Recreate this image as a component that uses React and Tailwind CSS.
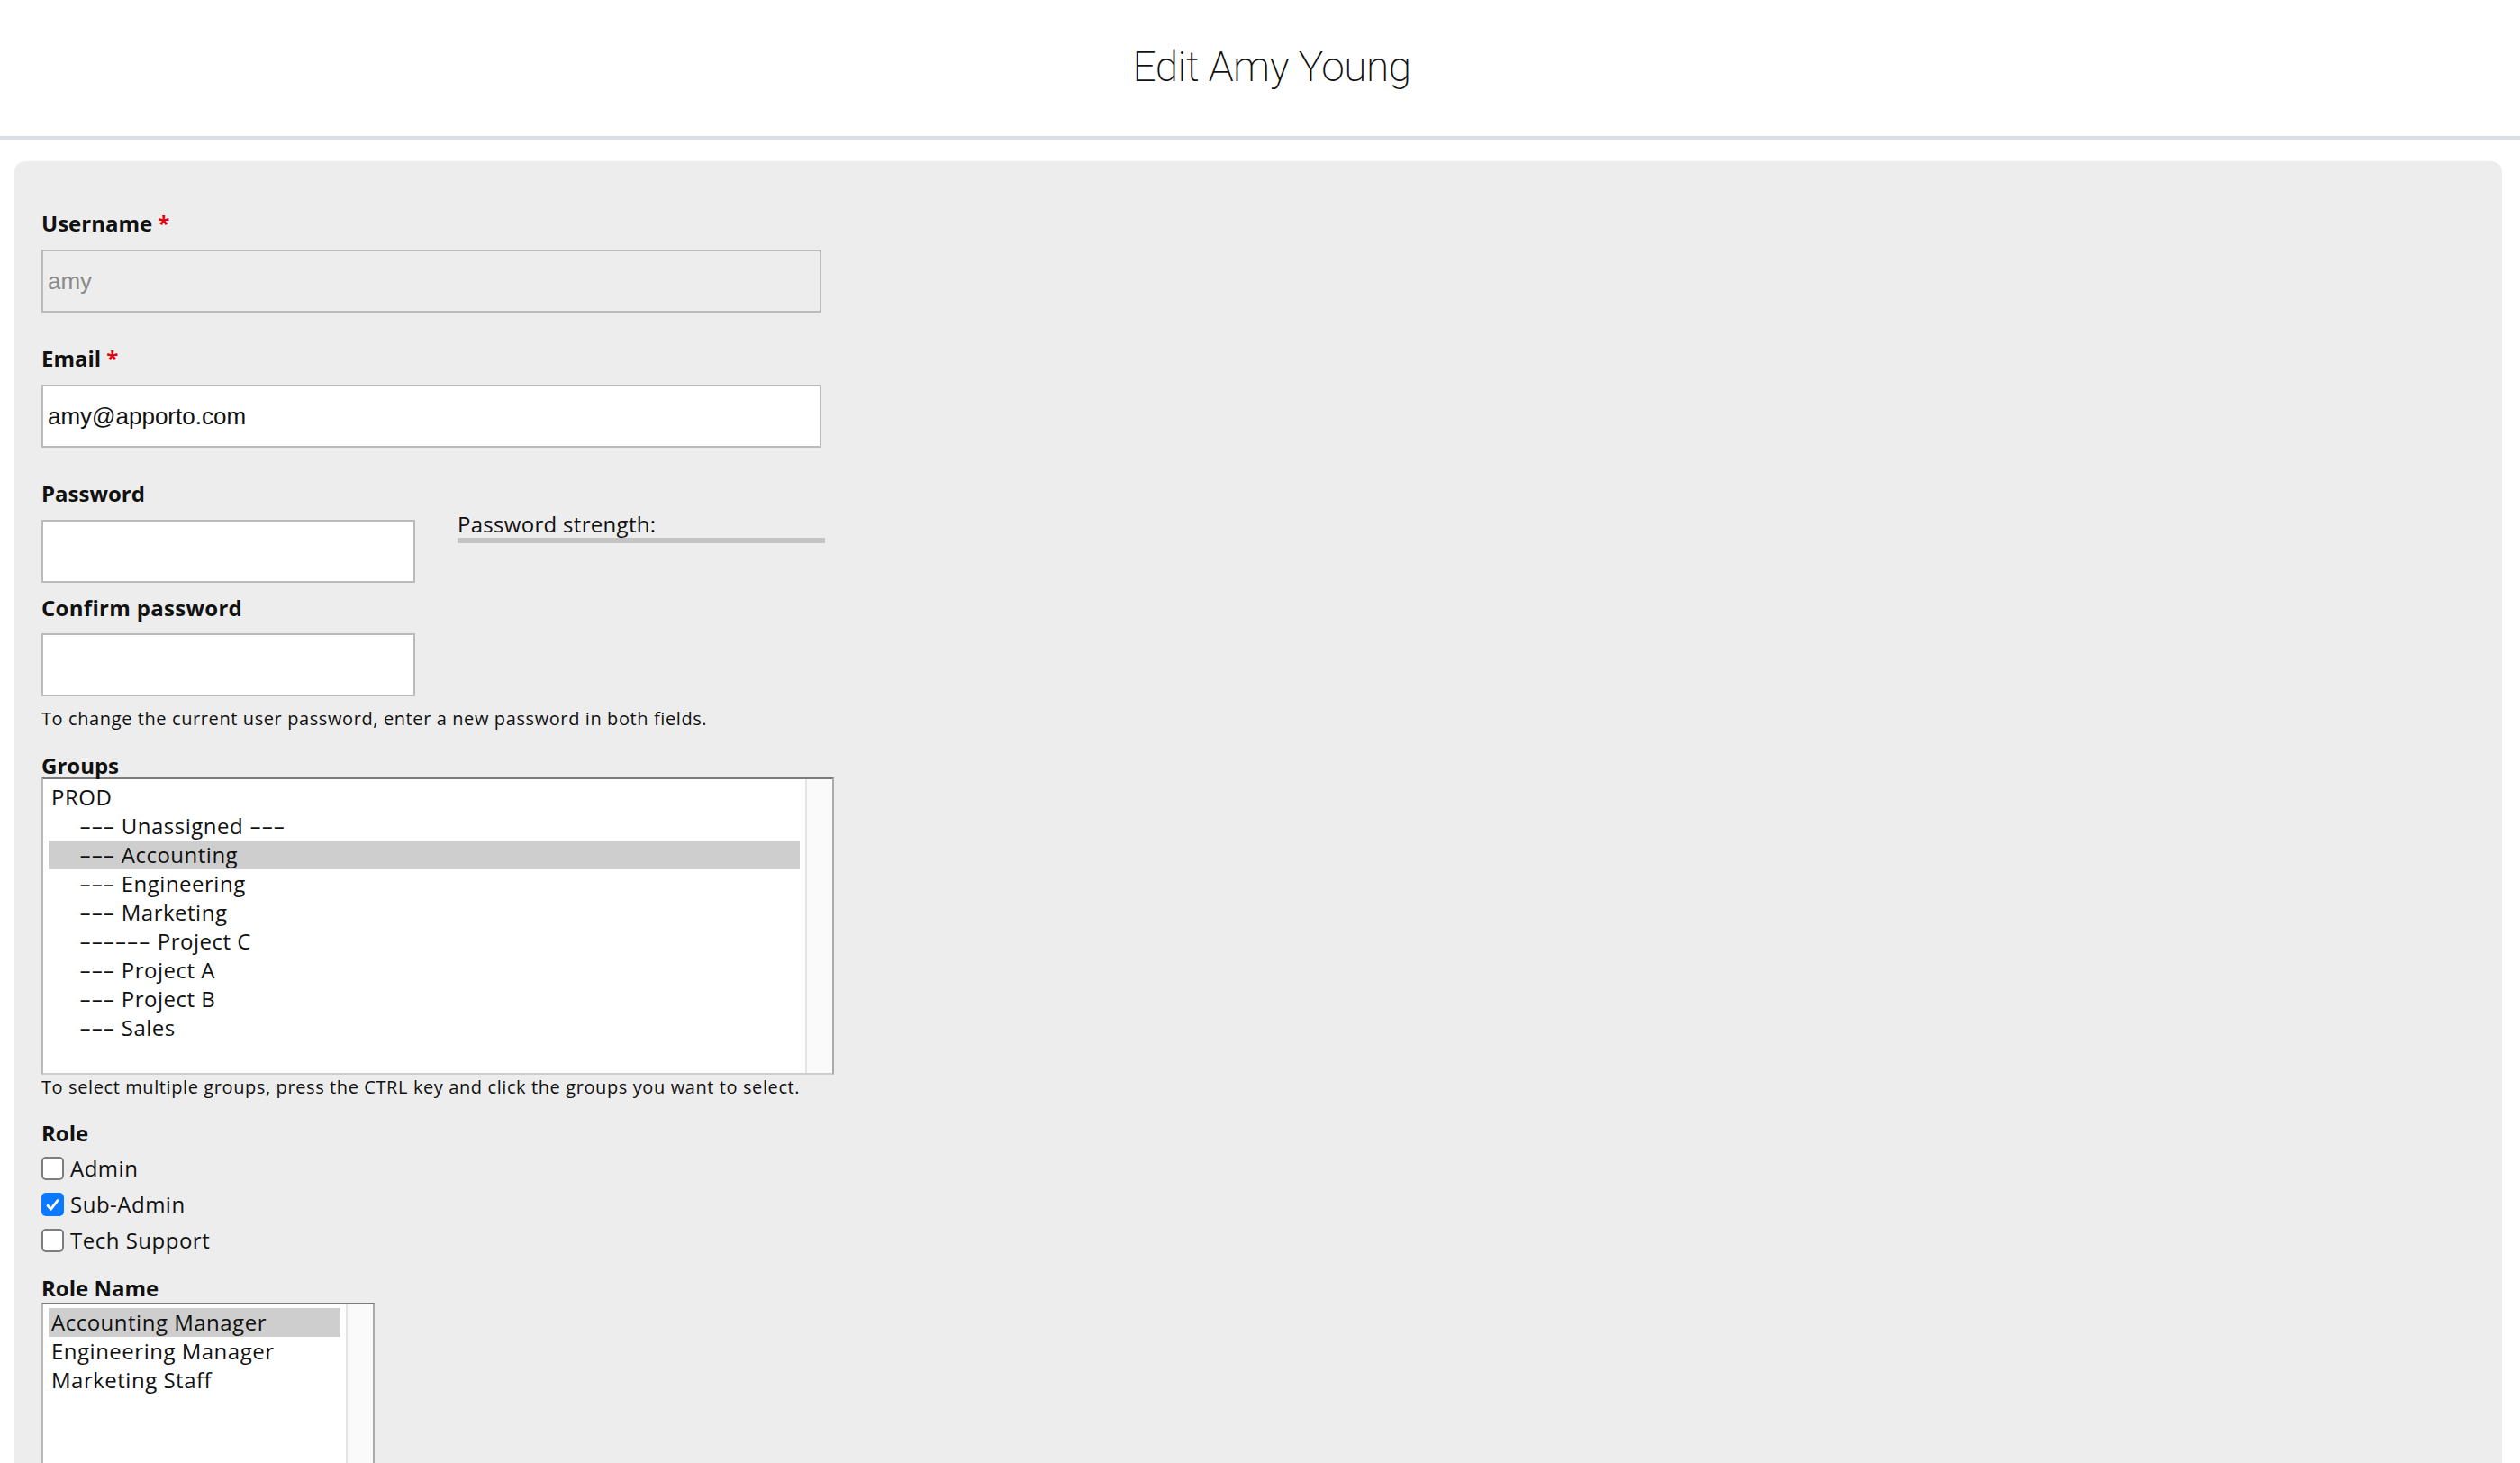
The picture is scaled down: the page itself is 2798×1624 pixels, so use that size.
import React from "react";

const Label = ({ children, required, className = "" }) => (
  <div className={"text-[24px] leading-[28px] font-bold text-[#111] " + className}>
    {children}
    {required && <span className="ml-[6px] text-[#e3000f]">*</span>}
  </div>
);

const Checkbox = ({ checked, label }) => (
  <div className="flex h-[32px] items-center">
    {checked ? (
      <span className="flex h-[26px] w-[25px] items-center justify-center rounded-[5px] bg-[#0b79ff]">
        <svg width="17" height="17" viewBox="0 0 17 17">
          <path d="M3 9.2 L6.6 13.2 L14 3.6" fill="none" stroke="white" strokeWidth="2.8" strokeLinecap="round" strokeLinejoin="round" />
        </svg>
      </span>
    ) : (
      <span className="h-[26px] w-[25px] rounded-[5px] border-2 border-[#7d7d7d] bg-white" />
    )}
    <span className="ml-[7px] text-[24px] leading-[32px] tracking-[0.5px] text-[#111]">{label}</span>
  </div>
);

const OptionText = ({ text }) =>
  text.split(/(-+)/).map((part, i) => {
    if (part === "---")
      return (
        <span key={i} className="inline-block w-[40px] origin-left scale-x-[1.7] tracking-normal">
          {part}
        </span>
      );
    if (part === "------")
      return (
        <span key={i} className="inline-block w-[80px] origin-left scale-x-[1.7] tracking-normal">
          {part}
        </span>
      );
    return <span key={i}>{part}</span>;
  });

const ListBox = ({ items, width, height }) => (
  <div
    className={
      "flex border-2 border-t-[#7b7b7b] border-l-[#b9b9b9] border-r-[#ababab] border-b-[#cdcdcd] bg-white " +
      width +
      " " +
      height
    }
  >
    <div className="flex-1 pl-[6px] pr-[6px] pt-[4px]">
      {items.map((it, i) => (
        <div
          key={i}
          className={
            "h-[32px] whitespace-pre text-[24px] leading-[32px] tracking-[0.5px] text-[#111] " +
            (it.indent ? "pl-[34px] " : "pl-[3px] ") +
            (it.selected ? "bg-[#cecece]" : "")
          }
        >
          <OptionText text={it.text} />
        </div>
      ))}
    </div>
    <div className="h-full w-[30px] border-l-2 border-[#e4e4e4] bg-[#fafafa]" />
  </div>
);

export default function App() {
  const groups = [
    { text: "PROD" },
    { text: "--- Unassigned ---", indent: true },
    { text: "--- Accounting", indent: true, selected: true },
    { text: "--- Engineering", indent: true },
    { text: "--- Marketing", indent: true },
    { text: "------ Project C", indent: true },
    { text: "--- Project A", indent: true },
    { text: "--- Project B", indent: true },
    { text: "--- Sales", indent: true },
  ];
  const roles = [
    { text: "Accounting Manager", selected: true },
    { text: "Engineering Manager" },
    { text: "Marketing Staff" },
  ];

  return (
    <div className="min-h-screen bg-white font-['Open_Sans',sans-serif]">
      <header className="flex h-[155px] justify-center border-b-4 border-[#d9dde6] pl-[26px] pt-[51px]">
        <h1 className="font-['Roboto',sans-serif] text-[46px] font-[200] leading-[46px] tracking-[-0.5px] text-[#111]">
          Edit Amy Young
        </h1>
      </header>

      <div className="ml-[16px] mr-[20px] mt-[24px] h-[1520px] rounded-t-[12px] bg-[#ededed] pl-[30px] pt-[55px]">
        <Label required>Username</Label>
        <div className="mt-[15px] flex h-[70px] w-[866px] items-center border-2 border-[#bbbbbb] bg-[#ededed] pl-[5px] font-['Liberation_Sans',sans-serif] text-[26px] text-[#8a8a8a]">
          amy
        </div>

        <Label required className="mt-[37px]">Email</Label>
        <div className="mt-[15px] flex h-[70px] w-[866px] items-center border-2 border-[#bbbbbb] bg-white pl-[5px] font-['Liberation_Sans',sans-serif] text-[26px] text-[#111]">
          amy@apporto.com
        </div>

        <div className="mt-[37px] flex">
          <div className="w-[415px]">
            <Label>Password</Label>
            <div className="mt-[15px] h-[70px] w-[415px] border-2 border-[#bbbbbb] bg-white" />
          </div>
          <div className="ml-[47px] w-[408px] pt-[34px]">
            <div className="text-[24px] leading-[28px] tracking-[0.3px] text-[#111]">Password strength:</div>
            <div className="mt-[1px] h-[6px] w-full bg-[#c4c4c4]" />
          </div>
        </div>

        <Label className="mt-[14px] tracking-[0.3px]">Confirm password</Label>
        <div className="mt-[14px] h-[70px] w-[415px] border-2 border-[#bbbbbb] bg-white" />

        <div className="mt-[11px] text-[20px] leading-[28px] tracking-[0.6px] text-[#111]">
          To change the current user password, enter a new password in both fields.
        </div>

        <Label className="mt-[24px]">Groups</Label>
        <div className="-mt-[1px]">
          <ListBox items={groups} width="w-[880px]" height="h-[330px]" />
        </div>
        <div className="text-[20px] leading-[28px] tracking-[0.6px] text-[#111]">
          To select multiple groups, press the CTRL key and click the groups you want to select.
        </div>

        <Label className="mt-[23px]">Role</Label>
        <div className="mt-[9px] flex flex-col gap-[8px]">
          <Checkbox label="Admin" />
          <Checkbox label="Sub-Admin" checked />
          <Checkbox label="Tech Support" />
        </div>

        <Label className="mt-[23px]">Role Name</Label>
        <div className="mt-[2px]">
          <ListBox items={roles} width="w-[370px]" height="h-[300px]" />
        </div>
      </div>
    </div>
  );
}
